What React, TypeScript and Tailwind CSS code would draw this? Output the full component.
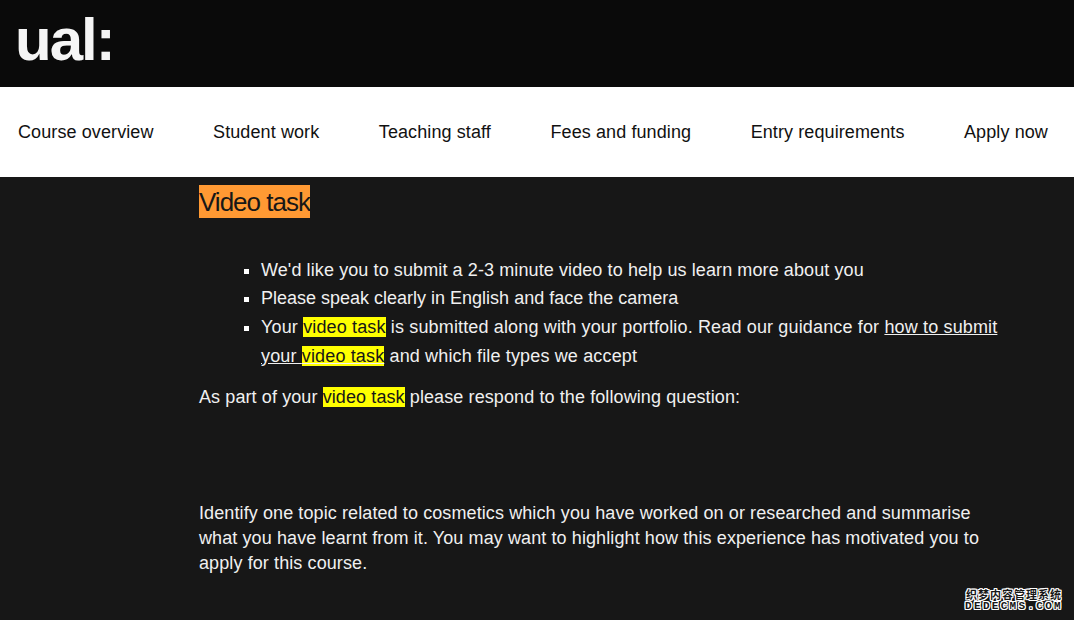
export default function App() {
  const nav = ["Course overview", "Student work", "Teaching staff", "Fees and funding", "Entry requirements", "Apply now"];
  const Mark = ({ children }: { children: string }) => <mark className="bg-[#ffff00] text-[#171717] font-normal">{children}</mark>;
  return (
    <div className="relative h-[620px] w-[1074px] overflow-hidden bg-[#171717] font-['Liberation_Sans',Arial,sans-serif] text-[18px] tracking-[0.1px] text-[#f0f0f0]">
      <header className="h-[87px] bg-[#0a0a0a] pl-[15px] pt-[4px]">
        <div className="text-[60px] font-bold leading-[72px] tracking-[-2px] text-[#f5f5f5]">ual:</div>
      </header>
      <nav className="flex h-[90px] items-center justify-between bg-white pl-[18px] pr-[26px] text-[18px] text-[#111]">
        {nav.map((n) => <span key={n}>{n}</span>)}
      </nav>
      <main className="pl-[199px] pr-[77px] pt-2">
        <h2 className="h-[33px] text-[26px] leading-[32px] tracking-[-1px]"><span className="inline-block bg-[#ff9933] pt-px text-[#171717]">Video task</span></h2>
        <ul className="mt-[37.5px] -mr-2 list-[square] pl-[62px] leading-[28.8px] marker:text-white">
          <li>We'd like you to submit a 2-3 minute video to help us learn more about you</li>
          <li className="tracking-normal">Please speak clearly in English and face the camera</li>
          <li className="tracking-[0.15px]">Your <Mark>video task</Mark> is submitted along with your portfolio. Read our guidance for <a className="underline">how to submit your <Mark>video task</Mark></a> and which file types we accept</li>
        </ul>
        <p className="mt-[14.5px] leading-[25px]">As part of your <Mark>video task</Mark> please respond to the following question:</p>
        <p className="mt-[91px] leading-[25px]">Identify one topic related to cosmetics which you have worked on or researched and summarise what you have learnt from it. You may want to highlight how this experience has motivated you to apply for this course.</p>
      </main>
      <div className="absolute bottom-[9px] right-[11px] text-center font-bold text-[#171717] [text-shadow:1px_0_#fff,-1px_0_#fff,0_1px_#fff,0_-1px_#fff,1px_1px_#fff,-1px_-1px_#fff,1px_-1px_#fff,-1px_1px_#fff]">
        <div className="font-['Noto_Sans_CJK_SC',sans-serif] text-[11px] leading-[14px] tracking-[1px]">织梦内容管理系统</div>
        <div className="font-['Liberation_Mono',monospace] text-[11px] leading-[10px] tracking-[2.3px]">DEDECMS.COM</div>
      </div>
    </div>
  );
}
